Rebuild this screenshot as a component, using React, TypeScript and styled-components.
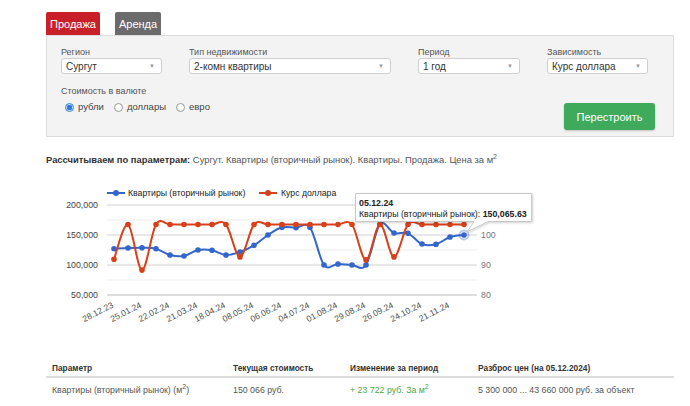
import React from 'react';
import styled, { createGlobalStyle } from 'styled-components';

const GlobalStyle = createGlobalStyle`
  html, body { margin: 0; padding: 0; background: #fff; }
  body { font-family: "Liberation Sans", Arial, sans-serif; color: #333; }
`;

const Page = styled.div`
  width: 628px;
  padding: 12px 0 0 46px;
`;

const Tabs = styled.div`
  display: flex;
  gap: 15px;
  height: 23px;
`;

const Tab = styled.div<{ $active?: boolean }>`
  height: 23px;
  padding: 0 4px;
  display: flex;
  align-items: center;
  background: ${(p) => (p.$active ? '#c81f29' : '#6b6b6b')};
  color: #fff;
  font-size: 11px;
  border-radius: 2px 2px 0 0;
`;

const Panel = styled.div`
  box-sizing: border-box;
  height: 102px;
  border: 1px solid #dddddd;
  background: #f3f3f3;
  padding: 10px 18px 6px 14px;
`;

const FieldsRow = styled.div`
  display: grid;
  grid-template-columns: 101px 202px 102px 101px;
  column-gap: 27px;
`;

const Field = styled.div`
  display: flex;
  flex-direction: column;
`;

const Label = styled.div`
  font-size: 9px;
  line-height: 12px;
  color: #555;
`;

const Select = styled.div`
  box-sizing: border-box;
  height: 16px;
  border: 1px solid #cfcfcf;
  border-radius: 3px;
  background: #fff;
  padding: 0 6px 0 4px;
  display: flex;
  align-items: center;
  justify-content: space-between;
  font-size: 10px;
  color: #333;
`;

const Caret = styled.span`
  font-size: 6px;
  color: #999;
`;

const BottomRow = styled.div`
  margin-top: 11px;
  display: flex;
  justify-content: space-between;
  align-items: flex-start;
  height: 45px;
`;

const Currency = styled.div`
  display: flex;
  flex-direction: column;
`;

const Radios = styled.div`
  display: flex;
  gap: 10px;
  margin-top: 4px;
  padding-left: 4px;
`;

const RadioItem = styled.label`
  display: flex;
  align-items: center;
  gap: 4px;
  font-size: 9.5px;
  line-height: 12px;
  color: #444;
`;

const RadioDot = styled.span<{ $checked?: boolean }>`
  box-sizing: border-box;
  width: 9px;
  height: 9px;
  border-radius: 50%;
  border: 1px solid ${(p) => (p.$checked ? '#3b7fd6' : '#9a9a9a')};
  background: ${(p) => (p.$checked ? 'radial-gradient(circle, #2f7be0 0 2.6px, #cfe1f7 3px)' : '#fff')};
`;

const RebuildButton = styled.button`
  align-self: flex-end;
  width: 91px;
  height: 27px;
  border: none;
  border-radius: 3px;
  background: #3fa95c;
  color: #fff;
  font-family: inherit;
  font-size: 11px;
  box-shadow: 0 1px 2px rgba(0, 0, 0, 0.2);
`;

const Heading = styled.div`
  margin-top: 16px;
  font-size: 9.4px;
  line-height: 14px;
  color: #555;
  b { color: #333; }
  sup { font-size: 7px; line-height: 0; }
`;

const ChartSvg = styled.svg`
  display: block;
  margin-top: 13px;
  font-family: "Liberation Sans", Arial, sans-serif;
`;

const Table = styled.table`
  margin-top: 29px;
  width: 628px;
  border-collapse: collapse;
  table-layout: fixed;
  font-size: 8.8px;
  line-height: 11px;
`;

const Th = styled.th<{ $w: number }>`
  box-sizing: border-box;
  width: ${(p) => p.$w}px;
  text-align: left;
  font-weight: bold;
  font-size: 8.3px;
  color: #333;
  padding: 4px 6px 2px;
  border-bottom: 2px solid #dddddd;
`;

const Td = styled.td<{ $green?: boolean }>`
  padding: 7px 6px;
  color: ${(p) => (p.$green ? '#4ea546' : '#555')};
  white-space: nowrap;
  sup { font-size: 7px; line-height: 0; }
`;

const BLUE = '#3366cc';
const RED = '#d8401a';

const blueData = [
  127.2, 128.3, 128.8, 127.2, 116.7, 115.0, 125.0, 124.5, 116.7, 121.7, 132.8, 150.0, 162.8,
  162.2, 162.8, 100.0, 101.7, 100.0, 100.0, 167.8, 153.3, 152.8, 135.0, 134.5, 146.7, 150.07,
];
const redData = [
  91.9, 103.5, 88.3, 103.5, 103.5, 103.5, 103.5, 103.5, 103.5, 92.7, 103.5, 103.5, 103.5,
  103.5, 103.5, 103.5, 103.5, 103.5, 91.7, 103.5, 92.7, 103.5, 103.5, 103.5, 103.5, 103.5,
];
const dates = [
  '28.12.23', '25.01.24', '22.02.24', '21.03.24', '18.04.24', '08.05.24', '06.06.24',
  '04.07.24', '01.08.24', '29.08.24', '26.09.24', '24.10.24', '21.11.24',
];

const X0 = 114;
const DX = 14;
const xAt = (i: number) => X0 + i * DX;
const yLeft = (v: number) => 205 + (200 - v) * 0.6;
const yRight = (v: number) => 235 + (100 - v) * 3;

type Pt = [number, number];

function spline(pts: Pt[]): string {
  let d = `M${pts[0][0]},${pts[0][1].toFixed(2)}`;
  for (let i = 0; i < pts.length - 1; i++) {
    const p0 = pts[i - 1] || pts[i];
    const p1 = pts[i];
    const p2 = pts[i + 1];
    const p3 = pts[i + 2] || p2;
    const c1x = p1[0] + (p2[0] - p0[0]) / 6;
    const c1y = p1[1] + (p2[1] - p0[1]) / 6;
    const c2x = p2[0] - (p3[0] - p1[0]) / 6;
    const c2y = p2[1] - (p3[1] - p1[1]) / 6;
    d += ` C${c1x.toFixed(2)},${c1y.toFixed(2)} ${c2x.toFixed(2)},${c2y.toFixed(2)} ${p2[0]},${p2[1].toFixed(2)}`;
  }
  return d;
}

const bluePts: Pt[] = blueData.map((v, i) => [xAt(i), yLeft(v)]);
const redPts: Pt[] = redData.map((v, i) => [xAt(i), yRight(v)]);

function Chart() {
  const majors = [
    { y: 205, l: '200,000', r: '' },
    { y: 235, l: '150,000', r: '100' },
    { y: 265, l: '100,000', r: '90' },
    { y: 295, l: '50,000', r: '80' },
  ];
  const minors = [220, 250, 280];
  const last = bluePts[bluePts.length - 1];
  return (
    <ChartSvg width={628} height={150} viewBox="46 180 628 150">
      <defs>
        <filter id="tipShadow" x="-10%" y="-30%" width="120%" height="170%">
          <feDropShadow dx="1" dy="1" stdDeviation="1.2" floodColor="#000" floodOpacity="0.18" />
        </filter>
      </defs>
      <g fontSize="8.7" fill="#222">
        <line x1={107} y1={193} x2={125} y2={193} stroke={BLUE} strokeWidth={2} />
        <circle cx={116} cy={193} r={3} fill={BLUE} />
        <text x={128} y={196.3}>Квартиры (вторичный рынок)</text>
        <line x1={259} y1={193} x2={277} y2={193} stroke={RED} strokeWidth={2} />
        <circle cx={268} cy={193} r={3} fill={RED} />
        <text x={281} y={196.3}>Курс доллара</text>
      </g>
      {minors.map((y) => (
        <line key={y} x1={107} x2={477} y1={y} y2={y} stroke="#ececec" strokeWidth={1} />
      ))}
      {majors.map((m) => (
        <line key={m.y} x1={107} x2={477} y1={m.y} y2={m.y} stroke={m.y === 295 ? '#bdbdbd' : '#d0d0d0'} strokeWidth={1} />
      ))}
      <g fontSize="8.8" fill="#444">
        {majors.map((m) => (
          <text key={m.l} x={98} y={m.y + 3.2} textAnchor="end">
            {m.l}
          </text>
        ))}
        {majors
          .filter((m) => m.r)
          .map((m) => (
            <text key={m.r} x={481} y={m.y + 3.2} fill="#777">
              {m.r}
            </text>
          ))}
      </g>
      <path d={spline(bluePts)} fill="none" stroke={BLUE} strokeWidth={2} />
      {bluePts.map(([x, y], i) => (
        <circle key={i} cx={x} cy={y} r={2.8} fill={BLUE} />
      ))}
      <path d={spline(redPts)} fill="none" stroke={RED} strokeWidth={2} />
      {redPts.map(([x, y], i) => (
        <circle key={i} cx={x} cy={y} r={2.8} fill={RED} />
      ))}
      <circle cx={last[0]} cy={last[1]} r={4.5} fill="none" stroke={BLUE} strokeOpacity={0.35} strokeWidth={2} />
      <g fontSize="8.6" fill="#555">
        {dates.map((d, i) => {
          const ax = xAt(i * 2);
          const ay = 307;
          return (
            <text key={d} x={ax} y={ay} textAnchor="end" transform={`rotate(-27 ${ax} ${ay})`}>
              {d}
            </text>
          );
        })}
      </g>
      <g filter="url(#tipShadow)">
        <path
          d="M355.5,193.5 H531.5 V221.5 H488 L467,232 L474,221.5 H355.5 Z"
          fill="#fff"
          stroke="#c8c8c8"
          strokeWidth={1}
        />
      </g>
      <g fontSize="8.8" fill="#222">
        <text x={359} y={205.5} fontWeight="bold">05.12.24</text>
        <text x={359} y={216.5}>
          Квартиры (вторичный рынок): <tspan fontWeight="bold">150,065.63</tspan>
        </text>
      </g>
    </ChartSvg>
  );
}

export default function App() {
  return (
    <>
      <GlobalStyle />
      <Page>
        <Tabs>
          <Tab $active>Продажа</Tab>
          <Tab>Аренда</Tab>
        </Tabs>
        <Panel>
          <FieldsRow>
            <Field>
              <Label>Регион</Label>
              <Select>
                Сургут<Caret>▼</Caret>
              </Select>
            </Field>
            <Field>
              <Label>Тип недвижимости</Label>
              <Select>
                2-комн квартиры<Caret>▼</Caret>
              </Select>
            </Field>
            <Field>
              <Label>Период</Label>
              <Select>
                1 год<Caret>▼</Caret>
              </Select>
            </Field>
            <Field>
              <Label>Зависимость</Label>
              <Select>
                Курс доллара<Caret>▼</Caret>
              </Select>
            </Field>
          </FieldsRow>
          <BottomRow>
            <Currency>
              <Label>Стоимость в валюте</Label>
              <Radios>
                <RadioItem>
                  <RadioDot $checked />
                  рубли
                </RadioItem>
                <RadioItem>
                  <RadioDot />
                  доллары
                </RadioItem>
                <RadioItem>
                  <RadioDot />
                  евро
                </RadioItem>
              </Radios>
            </Currency>
            <RebuildButton>Перестроить</RebuildButton>
          </BottomRow>
        </Panel>
        <Heading>
          <b>Рассчитываем по параметрам:</b> Сургут. Квартиры (вторичный рынок). Квартиры. Продажа. Цена за м
          <sup>2</sup>
        </Heading>
        <Chart />
        <Table>
          <thead>
            <tr>
              <Th $w={181}>Параметр</Th>
              <Th $w={117}>Текущая стоимость</Th>
              <Th $w={128}>Изменение за период</Th>
              <Th $w={202}>Разброс цен (на 05.12.2024)</Th>
            </tr>
          </thead>
          <tbody>
            <tr>
              <Td>
                Квартиры (вторичный рынок) (м<sup>2</sup>)
              </Td>
              <Td>150 066 руб.</Td>
              <Td $green>
                + 23 722 руб. За м<sup>2</sup>
              </Td>
              <Td>5 300 000 ... 43 660 000 руб. за объект</Td>
            </tr>
          </tbody>
        </Table>
      </Page>
    </>
  );
}
